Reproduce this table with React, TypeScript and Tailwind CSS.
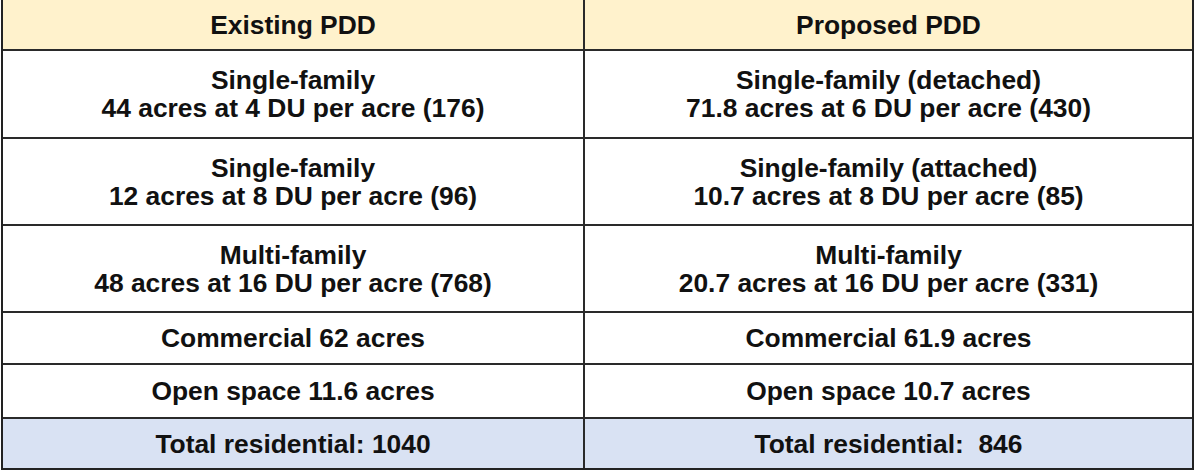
import React from "react";

type Row = { left: string[]; right: string[]; h: string; bg?: string };

const rows: Row[] = [
  { left: ["Existing PDD"], right: ["Proposed PDD"], h: "h-[51px]", bg: "bg-[#fff2cc]" },
  {
    left: ["Single-family", "44 acres at 4 DU per acre (176)"],
    right: ["Single-family (detached)", "71.8 acres at 6 DU per acre (430)"],
    h: "h-[88px]",
  },
  {
    left: ["Single-family", "12 acres at 8 DU per acre (96)"],
    right: ["Single-family (attached)", "10.7 acres at 8 DU per acre (85)"],
    h: "h-[87px]",
  },
  {
    left: ["Multi-family", "48 acres at 16 DU per acre (768)"],
    right: ["Multi-family", "20.7 acres at 16 DU per acre (331)"],
    h: "h-[87px]",
  },
  { left: ["Commercial 62 acres"], right: ["Commercial 61.9 acres"], h: "h-[52px]" },
  { left: ["Open space 11.6 acres"], right: ["Open space 10.7 acres"], h: "h-[54px]" },
  {
    left: ["Total residential: 1040"],
    right: ["Total residential:\u00a0 846"],
    h: "h-[49px]",
    bg: "bg-[#d9e2f3]",
  },
];

function Cell({ lines, className }: { lines: string[]; className: string }) {
  return (
    <div className={`flex flex-col items-center justify-center text-center ${className}`}>
      {lines.map((l, i) => (
        <div key={i} className="leading-[28px] whitespace-pre">
          {l}
        </div>
      ))}
    </div>
  );
}

export default function App() {
  return (
    <div className="w-[1200px] h-[473px] bg-white pl-px">
      <div
        className="w-[1193px] border-x-2 border-b-2 border-[#222] text-[#111] font-bold text-[26.4px]"
        style={{ fontFamily: '"Liberation Sans", Arial, sans-serif' }}
      >
        {rows.map((r, i) => (
          <div
            key={i}
            className={`flex ${r.h} ${r.bg ?? "bg-white"} ${
              i < rows.length - 1 ? "border-b-2 border-[#2a2a2a]" : ""
            }`}
          >
            <Cell lines={r.left} className="w-[582px] border-r-2 border-[#2a2a2a]" />
            <Cell lines={r.right} className="flex-1" />
          </div>
        ))}
      </div>
    </div>
  );
}
